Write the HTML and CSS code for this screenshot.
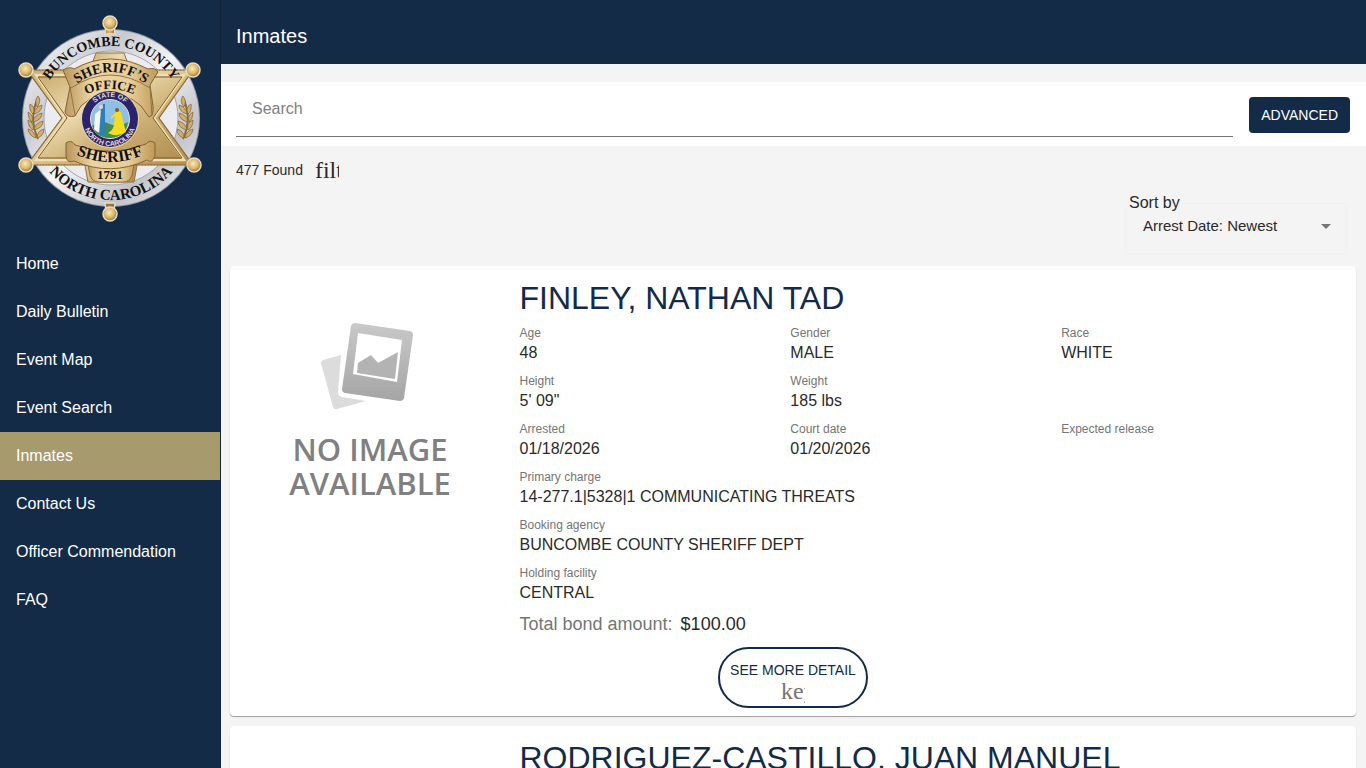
FILE: index.html
```html
<!DOCTYPE html>
<html lang="en">
<head>
<meta charset="utf-8">
<meta name="viewport" content="width=device-width, initial-scale=1">
<title>Inmates</title>
<link rel="stylesheet" href="styles.css">
</head>
<body>
<div class="app">
  <nav class="sidebar">
    <svg class="badge" viewBox="0 0 220 230" role="img" aria-label="Buncombe County Sheriff's Office">
      <defs>
        <linearGradient id="silver" x1="0" y1="0" x2="1" y2="1">
          <stop offset="0" stop-color="#fff"/><stop offset=".3" stop-color="#c9cad0"/>
          <stop offset=".5" stop-color="#f4f4f6"/><stop offset=".75" stop-color="#c2c3ca"/><stop offset="1" stop-color="#f5f5f5"/>
        </linearGradient>
        <linearGradient id="gold" x1="0" y1="0" x2="1" y2="1">
          <stop offset="0" stop-color="#c9aa6c"/><stop offset=".35" stop-color="#ecdbb0"/>
          <stop offset=".6" stop-color="#cfb277"/><stop offset="1" stop-color="#b08c4e"/>
        </linearGradient>
        <linearGradient id="ribbon" x1="0" y1="0" x2="1" y2="0">
          <stop offset="0" stop-color="#b8955a"/><stop offset=".3" stop-color="#ecd4a2"/>
          <stop offset=".7" stop-color="#e8ce98"/><stop offset="1" stop-color="#be9959"/>
        </linearGradient>
        <radialGradient id="ball" cx=".45" cy=".4" r=".6">
          <stop offset="0" stop-color="#fbe9b4"/><stop offset=".6" stop-color="#d9b56c"/><stop offset="1" stop-color="#94703a"/>
        </radialGradient>
        <path id="arc-county" d="M39 118a72 72 0 0 1 144 0"/>
        <path id="arc-state" d="M29 118a82 82 0 0 0 164 0"/>
        <path id="arc-sheriffs" d="M60 98Q111 46 162 98"/>
        <path id="arc-office" d="M70 104Q110 74 150 104"/>
        <path id="arc-sheriff" d="M62 147Q110 177 158 147"/>
        <path id="arc-seal" d="M88 119a22 22 0 0 1 44 0"/>
        <path id="arc-seal2" d="M83 119a27 27 0 0 0 54 0"/>
        <g id="wheat">
          <path d="M38 139Q29 119 37 100" fill="none" stroke="#8d6d38" stroke-width="2"/>
          <g fill="#cfae70" stroke="#7c602f" stroke-width=".7">
            <path d="M37 107q-3-6 1-11q4 5-1 11z"/>
            <path d="M33 114q-4-3-3-10q6 3 3 10zM34 114q1-7 8-9q0 7-8 9z"/>
            <path d="M32 122q-4-3-4-10q6 3 4 10zM33 122q1-7 9-9q0 7-9 9z"/>
            <path d="M33 130q-5-3-5-10q7 3 5 10zM34 130q1-7 9-9q0 7-9 9z"/>
            <path d="M36 138q-7-2-8-9q7 2 8 9zM37 138q0-7 7-9q0 7-7 9z"/>
          </g>
        </g>
      </defs>
      <circle cx="111" cy="118" r="89" fill="#8e97a5"/>
      <circle cx="111" cy="118" r="88" fill="url(#silver)"/>
      <circle cx="111" cy="118" r="67" fill="#ececf0" stroke="#a3a6ae"/>
      <path d="M96 53h28l7 19H89zM84 160l4 22h46l4-22z" fill="url(#gold)" stroke="#92713c"/>
      <path d="M27 70H193L159 118 193 165H27L62 118z" fill="url(#gold)" stroke="#8f6f3b" stroke-width="1.2"/>
      <path d="M36 75H184L154 118 184 160H36L66 118z" fill="url(#gold)" stroke="#f1deb0" stroke-width="2.5"/>
      <path d="M38 77H182L153 118 182 158H38L67 118z" fill="none" stroke="#785b2c" stroke-width="1"/>
      <path d="M27 70H193L159 118 193 165H27L62 118z" fill="none" stroke="#725a30" stroke-width=".6" stroke-dasharray="1 2"/>
      <g fill="url(#ball)" stroke="#e6dcc2" stroke-width="1.5">
        <path d="M105 34l1-8h8l1 8zM105 203l1 7h8l1-7z"/>
        <circle cx="110" cy="23" r="7"/><circle cx="193" cy="70" r="7"/><circle cx="194" cy="165" r="7"/>
        <circle cx="110" cy="214" r="7"/><circle cx="26" cy="165" r="7"/><circle cx="26" cy="70" r="7"/>
      </g>
      <use href="#wheat"/>
      <use href="#wheat" transform="translate(221 0) scale(-1 1)"/>
      <path d="M86 155l4 20q2 7 9 7h24q7 0 9-7l4-20z" fill="url(#ribbon)" stroke="#8f6f3b"/>
      <path d="M63 70Q70 66 74 69Q110 49 148 69Q155 67 158 72L150 85L153 106Q154 116 149 117L141 106Q110 79 81 106L75 116Q67 118 65 112L70 87z" fill="url(#ribbon)" stroke="#846433"/>
      <path d="M71 88Q110 62 150 88M70 87l5 28M150 86l2 30" fill="none" stroke="#94733d"/>
      <path d="M66 143Q71 139 75 145Q110 158 146 144Q150 139 155 143V156Q152 164 147 160Q110 177 74 161Q67 164 66 156z" fill="url(#ribbon)" stroke="#846433"/>
      <circle cx="110" cy="119" r="29" fill="#e8d49b"/>
      <circle cx="110" cy="119" r="28" fill="#2b236c"/>
      <circle cx="110" cy="119" r="19.5" fill="#8ebfe4" stroke="#e7dfc4"/>
      <path d="M92 126q8-7 18-2q8 4 18-2q-2 15-18 16q-14 0-18-12z" fill="#3f8f4a"/>
      <path d="M94 129l1-15 5-4 2 3v20q-5 0-8-4z" fill="#f5f5ef"/>
      <path d="M99 135l2-27 3-1 2 28zM103 104h2v31h-2z" fill="#2d7fb7"/>
      <path d="M108 133q6-3 6-10l1-7-4 3v-2l6-6 4 1 2 9 3 11q-9 6-18 1z" fill="#f5dc23"/>
      <circle cx="101" cy="107" r="2" fill="#f1d5b8"/><circle cx="117" cy="110" r="2" fill="#8a5a30"/>
      <g class="badge-text" text-anchor="middle">
        <text font-size="14"><textPath href="#arc-county" startOffset="50%">BUNCOMBE COUNTY</textPath></text>
        <text font-size="15"><textPath href="#arc-state" startOffset="50%">NORTH CAROLINA</textPath></text>
        <text font-size="14"><textPath href="#arc-sheriffs" startOffset="50%">SHERIFF’S</textPath></text>
        <text font-size="13"><textPath href="#arc-office" startOffset="50%">OFFICE</textPath></text>
        <text font-size="16"><textPath href="#arc-sheriff" startOffset="50%">SHERIFF</textPath></text>
        <text x="110" y="179" font-size="13">1791</text>
      </g>
      <g class="seal-text" text-anchor="middle">
        <text><textPath href="#arc-seal" startOffset="50%">STATE OF</textPath></text>
        <text><textPath href="#arc-seal2" startOffset="50%">NORTH CAROLINA</textPath></text>
      </g>
    </svg>
    <ul class="menu">
      <li><a href="#">Home</a></li>
      <li><a href="#">Daily Bulletin</a></li>
      <li><a href="#">Event Map</a></li>
      <li><a href="#">Event Search</a></li>
      <li><a class="active" href="#">Inmates</a></li>
      <li><a href="#">Contact Us</a></li>
      <li><a href="#">Officer Commendation</a></li>
      <li><a href="#">FAQ</a></li>
    </ul>
  </nav>

  <div class="main">
    <header class="topbar"><h1>Inmates</h1></header>

    <form class="search">
      <input type="text" placeholder="Search" aria-label="Search">
      <button type="button">ADVANCED</button>
    </form>

    <div class="found">
      <span>477 Found</span>
      <span class="icon">filter_list</span>
    </div>

    <fieldset class="sort">
      <legend><label for="sort">Sort by</label></legend>
      <select id="sort">
        <option>Arrest Date: Newest</option>
      </select>
      <svg class="arrow" viewBox="0 0 24 24"><path d="M7 10l5 5 5-5z"/></svg>
    </fieldset>

    <section class="card">
      <div class="card-body">
        <svg class="photo" viewBox="0 0 200 210" role="img" aria-label="No image available">
          <defs>
            <linearGradient id="frame" x1="0" y1="0" x2="0" y2="1">
              <stop offset="0" stop-color="#c9c9c9"/><stop offset="1" stop-color="#a5a5a5"/>
            </linearGradient>
          </defs>
          <path d="M53 60L71 55 68 92Q68 96 72 97L96 101 67 109Q64 110 63 107L51 63Q51 61 53 60z" fill="#dcdcdc"/>
          <path d="M85 23L140 31Q143 32 143 35L134 98Q133 101 130 101L75 93Q72 92 72 89L81 26Q82 23 85 23zM88 33L83 74 127 82 132 40z" fill="url(#frame)" fill-rule="evenodd"/>
          <path d="M88 63L101 55 108 63 128 52 125 79 87 73z" fill="#b3b3b3"/>
          <text x="100" y="161">NO IMAGE</text>
          <text x="100" y="195">AVAILABLE</text>
        </svg>
        <div class="info">
          <h2>FINLEY, NATHAN TAD</h2>
          <dl class="fields">
            <div><dt>Age</dt><dd>48</dd></div>
            <div><dt>Gender</dt><dd>MALE</dd></div>
            <div><dt>Race</dt><dd>WHITE</dd></div>
            <div><dt>Height</dt><dd>5' 09"</dd></div>
            <div class="two"><dt>Weight</dt><dd>185 lbs</dd></div>
            <div><dt>Arrested</dt><dd>01/18/2026</dd></div>
            <div><dt>Court date</dt><dd>01/20/2026</dd></div>
            <div><dt>Expected release</dt><dd></dd></div>
            <div class="full"><dt>Primary charge</dt><dd>14-277.1|5328|1 COMMUNICATING THREATS</dd></div>
            <div class="full"><dt>Booking agency</dt><dd>BUNCOMBE COUNTY SHERIFF DEPT</dd></div>
            <div class="full"><dt>Holding facility</dt><dd>CENTRAL</dd></div>
          </dl>
          <p class="bond"><span>Total bond amount:</span> $100.00</p>
        </div>
      </div>
      <button class="more" type="button">
        SEE MORE DETAIL
        <span class="icon">keyboard_arrow_down</span>
      </button>
    </section>

    <section class="card">
      <div class="card-body">
        <div class="photo"></div>
        <div class="info">
          <h2>RODRIGUEZ-CASTILLO, JUAN MANUEL</h2>
        </div>
      </div>
    </section>
  </div>
</div>
</body>
</html>
```

FILE: styles.css
```css
* {
  box-sizing: border-box;
}
body {
  margin: 0;
  background: #f4f4f4;
  color: #2a2a2a;
  font-family: "Liberation Sans", Arial, sans-serif;
  font-size: 16px;
  line-height: 24px;
}
h1, h2, p, dl, dd, ul {
  margin: 0;
  padding: 0;
}
button, input, select {
  font-family: inherit;
}
.app {
  display: flex;
  height: 100vh;
  overflow: hidden;
}

/* left menu */
.sidebar {
  flex: none;
  width: 221px;
  background: #142b47;
  border-right: 1px solid #12233a;
}
.badge {
  display: block;
  width: 100%;
}
.badge-text {
  font-family: "Liberation Serif", serif;
  font-weight: bold;
  fill: #111;
}
.seal-text {
  font-family: "Liberation Sans", sans-serif;
  font-weight: bold;
  font-size: 7px;
  fill: #e3dccb;
}
.menu {
  padding-top: 10px;
  list-style: none;
}
.menu a {
  display: block;
  padding: 12px 16px;
  color: #fff;
  text-decoration: none;
}
.menu a.active {
  background: #a79a6c;
}

/* content */
.main {
  flex: 1;
  min-width: 0;
  overflow: hidden;
}
.topbar {
  padding: 24px 15px 16px;
  background: #142b47;
  color: #fff;
}
.topbar h1 {
  font-size: 20px;
  font-weight: normal;
  line-height: 24px;
}
.search {
  display: flex;
  align-items: flex-start;
  gap: 16px;
  height: 64px;
  margin-top: 18px;
  padding: 0 16px 0 15px;
  background: #fff;
}
.search input {
  flex: 1;
  min-width: 0;
  height: 55px;
  padding: 0 16px;
  border: 0;
  border-bottom: 1px solid #757575;
  background: none;
  font-size: 16px;
}
.search input::placeholder {
  color: #808080;
}
.search button {
  height: 36px;
  margin-top: 15px;
  padding: 0 12px;
  border: 0;
  border-radius: 4px;
  background: #142b47;
  color: #fff;
  font-size: 14px;
}
.found {
  display: flex;
  align-items: center;
  gap: 12px;
  height: 48px;
  padding: 0 15px;
  font-size: 14px;
}
.icon {
  display: block;
  width: 24px;
  height: 24px;
  overflow: hidden;
  font-family: "Liberation Serif", serif;
  font-size: 24px;
  line-height: 24px;
  text-align: left;
}
.sort {
  position: relative;
  width: 222px;
  margin: 0 19px 12px auto;
  padding: 0;
  border: 1px solid #f0f0f0;
  border-radius: 4px;
}
.sort legend {
  padding: 0 3px;
  line-height: 18px;
}
.sort select {
  display: block;
  width: 100%;
  height: 41px;
  padding: 0 48px 14px 17px;
  border: 0;
  background: none;
  color: #2a2a2a;
  font-size: 15px;
  appearance: none;
}
.arrow {
  position: absolute;
  top: 2px;
  right: 8px;
  width: 24px;
  height: 24px;
  fill: #757575;
  pointer-events: none;
}

/* inmate cards */
.card {
  margin: 0 10px 10px 9px;
  padding: 12px 0 8px;
  border-radius: 4px;
  background: #fff;
  box-shadow: 0 1px 1px #9e9e9e;
}
.card-body {
  display: grid;
  grid-template-columns: 25% 75%;
}
.photo {
  width: 200px;
  height: 210px;
  margin: 22px 0 0 40px;
}
.photo text {
  font-family: "Open Sans", sans-serif;
  font-size: 31px;
  font-weight: 600;
  text-anchor: middle;
  fill: #808080;
}
.info {
  padding: 0 24px 0 8px;
}
.info h2 {
  color: #142b47;
  font-size: 32px;
  font-weight: normal;
  line-height: 40px;
  white-space: nowrap;
}
.fields {
  display: grid;
  grid-template-columns: repeat(3, 1fr);
  padding-top: 5px;
}
.fields > div {
  height: 48px;
}
.fields .two {
  grid-column: span 2;
}
.fields .full {
  grid-column: 1 / -1;
}
.fields dt {
  color: #757575;
  font-size: 12px;
  line-height: 20px;
}
.fields dd {
  line-height: 20px;
}
.bond {
  padding: 1px 0 11px;
  font-size: 18px;
}
.bond span {
  margin-right: 3px;
  color: #757575;
}
.more {
  display: flex;
  flex-direction: column;
  align-items: center;
  margin: 0 auto;
  padding: 12px 10px 3px;
  border: 2px solid #142b47;
  border-radius: 32px;
  background: #fff;
  color: #142b47;
  font-size: 14px;
  line-height: 18px;
}
.more .icon {
  color: #757575;
}
```
